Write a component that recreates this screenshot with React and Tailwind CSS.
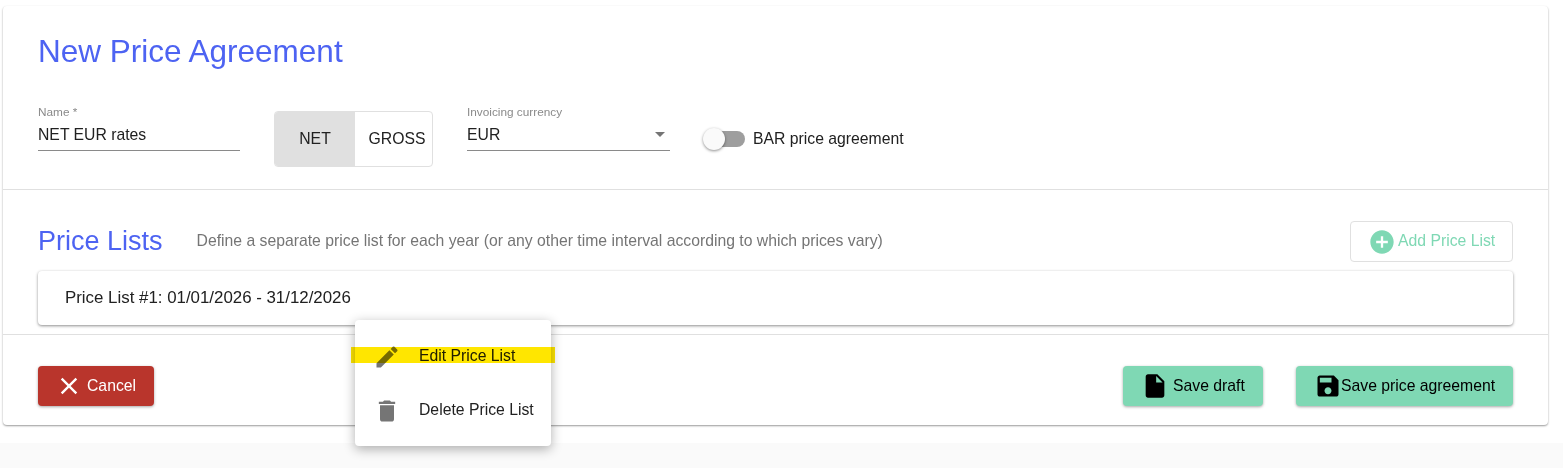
function Icon({ d, className }) {
  return (
    <svg viewBox="0 0 24 24" className={className} fill="currentColor">
      <path d={d} />
    </svg>
  );
}

const icons = {
  edit: "M3 17.25V21h3.75L17.81 9.94l-3.75-3.75L3 17.25zM20.71 7.04c.39-.39.39-1.02 0-1.41l-2.34-2.34c-.39-.39-1.02-.39-1.41 0l-1.83 1.83 3.75 3.75 1.83-1.83z",
  trash: "M6 19c0 1.1.9 2 2 2h8c1.1 0 2-.9 2-2V7H6v12zM19 4h-3.5l-1-1h-5l-1 1H5v2h14V4z",
  close: "M19 6.41L17.59 5 12 10.59 6.41 5 5 6.41 10.59 12 5 17.59 6.41 19 12 13.41 17.59 19 19 17.59 13.41 12z",
  add: "M12 2C6.48 2 2 6.48 2 12s4.48 10 10 10 10-4.48 10-10S17.52 2 12 2zm5 11h-4v4h-2v-4H7v-2h4V7h2v4h4v2z",
  file: "M6 2c-1.1 0-1.99.9-1.99 2L4 20c0 1.1.89 2 1.99 2H18c1.1 0 2-.9 2-2V8l-6-6H6zm7 7V3.5L18.5 9H13z",
  save: "M17 3H5c-1.11 0-2 .9-2 2v14c0 1.1.89 2 2 2h14c1.1 0 2-.9 2-2V7l-4-4zm-5 16c-1.66 0-3-1.34-3-3s1.34-3 3-3 3 1.34 3 3-1.34 3-3 3zm3-10H5V5h10v4z",
};

const btnShadow = "shadow-[0_1px_3px_rgba(0,0,0,0.35)]";

export default function App() {
  return (
    <div className="relative h-[468px] overflow-hidden bg-white font-[family-name:'Liberation_Sans',Arial,sans-serif] text-[15.75px] text-[#212121]">
      <div className="ml-[3px] mt-[6px] h-[419px] w-[1545px] rounded-[4px] bg-white shadow-[0_1px_2px_rgba(0,0,0,0.4)]">
        {/* header + fields */}
        <div className="h-[184px] border-b border-[#e0e0e0] pl-[35px]">
          <h1 className="pt-[27px] text-[31.5px] leading-[36px] text-[#4d63f2]">New Price Agreement</h1>
          <div className="mt-[42px] flex items-start">
            <div className="mt-[-6px] w-[202px] border-b border-[#8a8a8a] pb-[5px]">
              <div className="text-[11.8px] leading-[14px] text-[#8a8a8a]">Name *</div>
              <div className="mt-[6px] leading-[20px]">NET EUR rates</div>
            </div>
            <div className="ml-[34px] flex h-[56px] w-[159px] overflow-hidden rounded-[4px] border border-[#e0e0e0]">
              <div className="flex w-[80px] items-center justify-center bg-[#e0e0e0]">NET</div>
              <div className="flex flex-1 items-center justify-center pl-[7px]">GROSS</div>
            </div>
            <div className="relative ml-[34px] mt-[-6px] w-[203px] border-b border-[#8a8a8a] pb-[5px]">
              <div className="text-[11.8px] leading-[14px] text-[#8a8a8a]">Invoicing currency</div>
              <div className="mt-[6px] leading-[20px]">EUR</div>
              <div className="absolute right-[5px] top-[27px] h-0 w-0 border-x-[5px] border-t-[5px] border-x-transparent border-t-[#757575]" />
            </div>
            <div className="ml-[33px] mt-[15px] flex items-center">
              <div className="relative h-[16px] w-[42px]">
                <div className="absolute left-[6px] top-0 h-[16px] w-[36px] rounded-full bg-[#9e9e9e]" />
                <div className="absolute left-0 top-[-3px] h-[22px] w-[22px] rounded-full bg-[#fafafa] shadow-[0_1px_3px_rgba(0,0,0,0.45)]" />
              </div>
              <span className="ml-[8px] mt-[1px] leading-[24px]">BAR price agreement</span>
            </div>
          </div>
        </div>

        {/* price lists */}
        <div className="h-[145px] border-b border-[#e0e0e0] pl-[35px] pr-[35px]">
          <div className="flex h-[81px] items-start">
            <h2 className="mt-[35px] text-[27px] leading-[32px] text-[#4d63f2]">Price Lists</h2>
            <p className="ml-[34px] mt-[41px] leading-[20px] text-[#757575]">
              Define a separate price list for each year (or any other time interval according to which prices vary)
            </p>
            <button className="ml-auto mt-[31px] flex h-[41px] w-[163px] items-center rounded-[4px] border border-[#e0e0e0] pl-[17px] text-[#7fd8b4]">
              <Icon d={icons.add} className="mt-[1px] h-[28px] w-[28px]" />
              <span className="mb-[2px] ml-[2px]">Add Price List</span>
            </button>
          </div>
          <div className="flex h-[54px] items-center rounded-[4px] bg-white pl-[27px] text-[16.875px] shadow-[0_1px_3px_rgba(0,0,0,0.45)]">
            Price List #1: 01/01/2026 - 31/12/2026
          </div>
        </div>

        {/* footer actions */}
        <div className="flex pl-[35px] pr-[35px] pt-[31px]">
          <button className={`flex h-[40px] w-[116px] items-center rounded-[4px] bg-[#b9352c] pl-[17px] text-white ${btnShadow}`}>
            <Icon d={icons.close} className="h-[28px] w-[28px] shrink-0" />
            <span className="ml-[4px]">Cancel</span>
          </button>
          <button className={`ml-auto flex h-[40px] w-[140px] items-center rounded-[4px] bg-[#7fd8b4] pl-[18px] text-black ${btnShadow}`}>
            <Icon d={icons.file} className="h-[28px] w-[28px] shrink-0" />
            <span className="ml-[4px]">Save draft</span>
          </button>
          <button className={`ml-[33px] flex h-[40px] w-[217px] items-center rounded-[4px] bg-[#7fd8b4] pl-[18px] text-black ${btnShadow}`}>
            <Icon d={icons.save} className="h-[28px] w-[28px] shrink-0" />
            <span className="ml-[-1px]">Save price agreement</span>
          </button>
        </div>
      </div>

      {/* page background strip below the card */}
      <div className="mt-[18px] h-[25px] bg-[#fafafa]" />

      {/* context menu */}
      <div className="absolute left-[355px] top-[320px] h-[126px] w-[196px] rounded-[4px] bg-white shadow-[0_3px_12px_rgba(0,0,0,0.32)]">
        <div className="mt-[9px] flex h-[54px] items-center pl-[18px]">
          <Icon d={icons.edit} className="mt-[2px] h-[28px] w-[28px] shrink-0 text-[#757575]" />
          <span className="mb-[1px] ml-[18px]">Edit Price List</span>
        </div>
        <div className="flex h-[54px] items-center pl-[18px]">
          <Icon d={icons.trash} className="mt-[2px] h-[28px] w-[28px] shrink-0 text-[#757575]" />
          <span className="ml-[18px]">Delete Price List</span>
        </div>
      </div>

      {/* yellow highlighter over the edit entry */}
      <div className="absolute left-[351px] top-[347px] h-[16px] w-[204px] bg-[#ffe600] mix-blend-multiply" />
    </div>
  );
}
